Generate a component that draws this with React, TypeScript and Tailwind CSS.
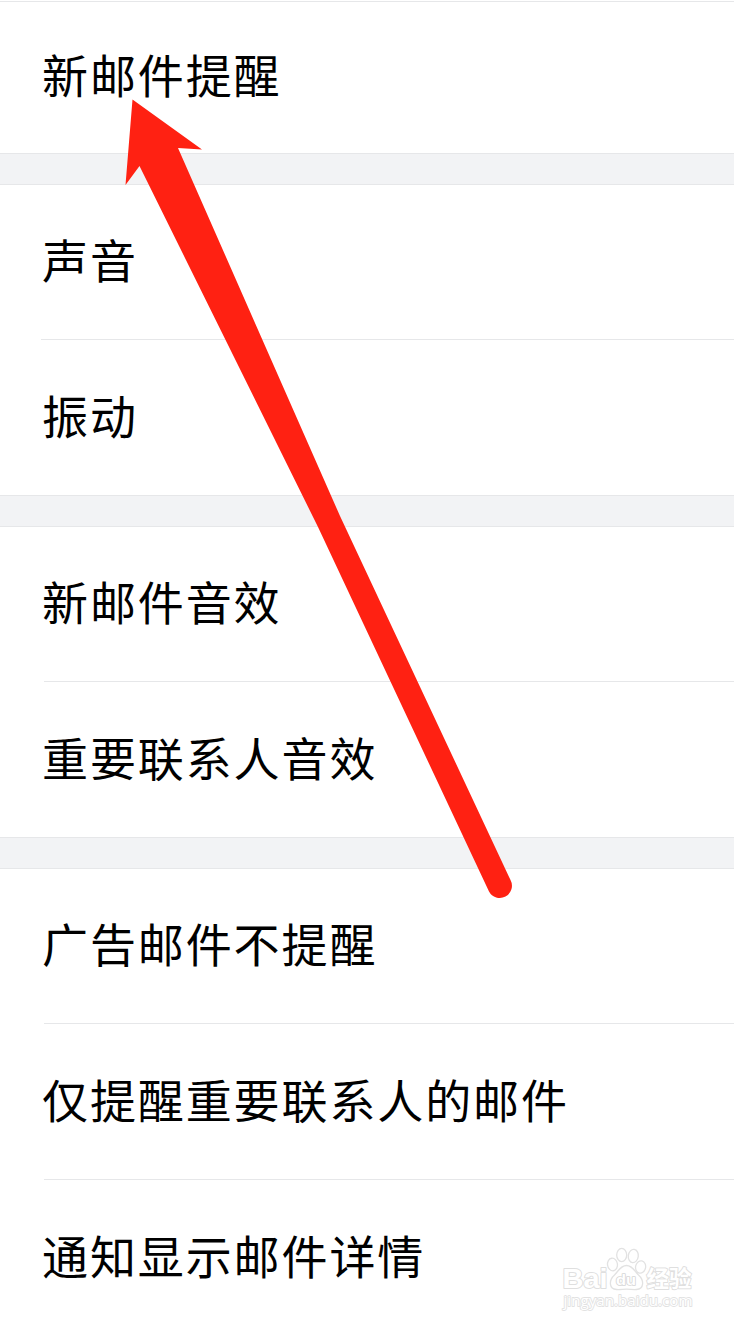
const groups = [
  { box: "h-[153px]", first: "h-[149px]", inset: "ml-[42px]", rows: ["新邮件提醒"] },
  { box: "h-[312px]", first: "h-[154px]", inset: "ml-[41px] pl-px", rows: ["声音", "振动"] },
  { box: "h-[312px]", first: "h-[154px]", inset: "ml-[44px] -indent-[2px]", rows: ["新邮件音效", "重要联系人音效"] },
  { box: "h-[460px]", first: "h-[154px]", inset: "ml-[44px] -indent-[2px]", rows: ["广告邮件不提醒", "仅提醒重要联系人的邮件", "通知显示邮件详情"] },
];

function Watermark() {
  return (
    <svg className="absolute left-[554px] top-[1240px]" width="150" height="76" viewBox="554 1240 150 76" aria-hidden="true">
      <g fill="#fff" stroke="#e2e2e2" strokeWidth="1.3">
        <ellipse cx="612.5" cy="1264.5" rx="5" ry="6.3" transform="rotate(-8 612.5 1264.5)" />
        <ellipse cx="621.7" cy="1255" rx="5" ry="6.6" />
        <ellipse cx="633.3" cy="1256" rx="5" ry="6.6" transform="rotate(8 633.3 1256)" />
        <ellipse cx="640.6" cy="1267" rx="5" ry="6.2" transform="rotate(12 640.6 1267)" />
        <path d="M626.5 1265.5c-6 0-8 5.500-12 9.500-6 5.500-5.500 14 2 14.500 4 .3 6-.3 10-.3s6 .6 10 .3c7.500-.5 8-9 2-14.500-4-4-6-9.500-12-9.500Z" />
      </g>
      <g fill="#fff" stroke="#dfdfdf" strokeWidth="2" strokeLinejoin="round" paintOrder="stroke" className="font-['Liberation_Sans','Noto_Sans_CJK_SC',sans-serif] font-bold">
        <text x="562.500" y="1288" fontSize="28" textLength="45" lengthAdjust="spacingAndGlyphs">Bai</text>
        <text x="616" y="1285" fontSize="15" textLength="20" lengthAdjust="spacingAndGlyphs" strokeWidth="1.6" stroke="#d6d6d6">du</text>
        <text x="646.500" y="1286.500" fontSize="23" textLength="45" lengthAdjust="spacingAndGlyphs">经验</text>
      </g>
      <text x="563.500" y="1305.500" fontSize="15" textLength="129" lengthAdjust="spacingAndGlyphs" fill="#fff" stroke="#e2e2e2" strokeWidth="1.8" strokeLinejoin="round" paintOrder="stroke" className="font-['Open_Sans',sans-serif]">jingyan.baidu.com</text>
    </svg>
  );
}

export default function App() {
  return (
    <main className="relative flex h-[1327px] w-[734px] flex-col gap-[30px] overflow-hidden bg-[#f2f3f5] font-['Noto_Sans_CJK_SC',sans-serif] text-black">
      <div className="-mb-[30px] h-px shrink-0 bg-white" />
      {groups.map((g, i) => (
        <section key={i} className={`flex shrink-0 flex-col border-y border-[#e6e7e9] bg-white ${g.box}`}>
          {g.rows.map((r, j) => (
            <div
              key={r}
              className={`flex shrink-0 items-center whitespace-nowrap text-[46px] leading-none tracking-[1.9px] ${g.inset} ${j > 0 ? "h-[156px] border-t border-[#e6e7e9] pb-[8px]" : `${g.first} pb-[8px]`}`}
            >
              {r}
            </div>
          ))}
        </section>
      ))}
      <div className="-mt-[31px] flex-1 bg-white" />
      <svg className="absolute left-0 top-0" width="734" height="1327" viewBox="0 0 734 1327" aria-hidden="true">
        <path d="M132.500 99.500 202 149.500 178 148 340 516 510.500 880A12 12 0 0 1 489 891.500L318 527 139.500 166 125.500 185Z" fill="#ff2112" />
      </svg>
      <Watermark />
    </main>
  );
}
